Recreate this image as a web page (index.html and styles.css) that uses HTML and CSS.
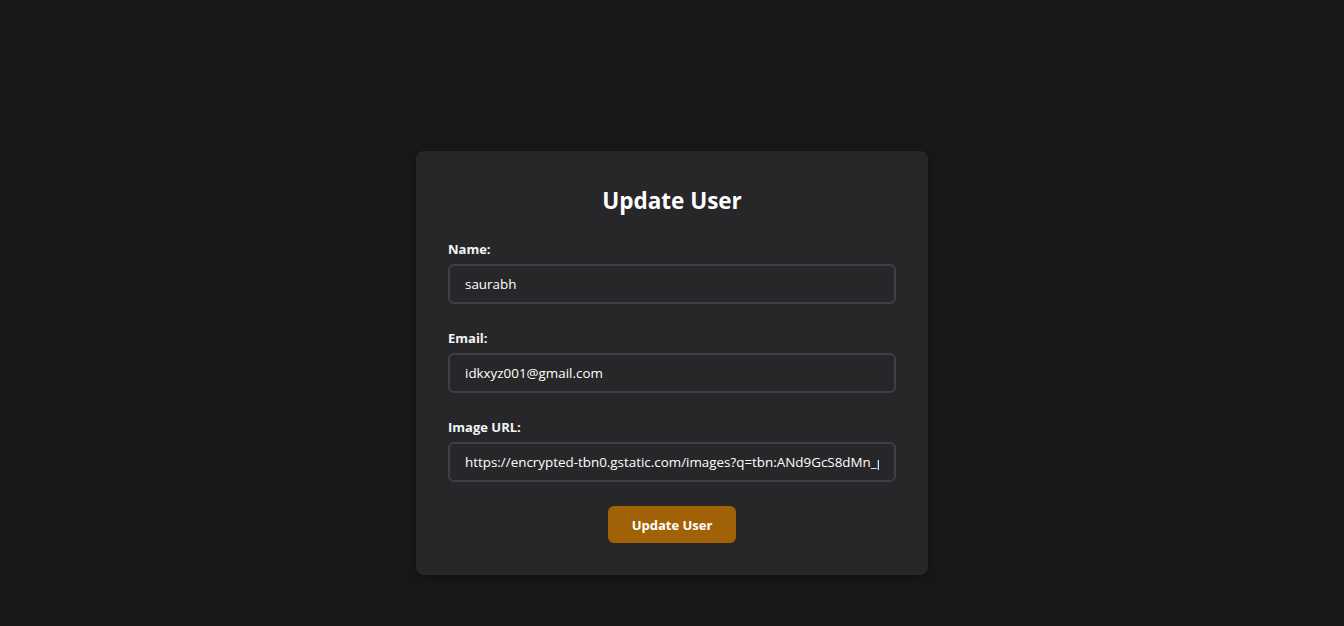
FILE: index.html
```html
<!DOCTYPE html>
<html lang="en">
<head>
<meta charset="utf-8">
<title>Update User</title>
<link rel="stylesheet" href="styles.css">
</head>
<body>
<header class="topbar"></header>
<main class="page">
  <form class="card">
    <h2 class="title">Update User</h2>
    <div class="field">
      <label class="label" for="name">Name:</label>
      <input class="input" id="name" type="text" value="saurabh">
    </div>
    <div class="field">
      <label class="label" for="email">Email:</label>
      <input class="input" id="email" type="email" value="idkxyz001@gmail.com">
    </div>
    <div class="field">
      <label class="label" for="img">Image URL:</label>
      <input class="input" id="img" type="text" value="https://encrypted-tbn0.gstatic.com/images?q=tbn:ANd9GcS8dMn_pL2xq7Jb0TzYwKfR3hVnQeUu4sXoAaDc&amp;s">
    </div>
    <div class="actions">
      <button class="btn" type="button">Update User</button>
    </div>
  </form>
</main>
</body>
</html>
```
FILE: styles.css
```css
* { box-sizing: border-box; }
html, body {
  margin: 0;
  padding: 0;
  background: #18181b;
  color: #ffffff;
  font-family: "Open Sans", "Noto Sans", sans-serif;
}
.topbar { height: 100px; }
.page {
  min-height: 526px;
  display: flex;
  align-items: center;
  justify-content: center;
}
.card {
  width: 512px;
  background: #27272a;
  border-radius: 8px;
  padding: 32px;
  box-shadow: 0 4px 12px rgba(0,0,0,0.25);
}
.title {
  margin: 0 0 20px;
  font-size: 22.5px;
  line-height: 36px;
  font-weight: 700;
  text-align: center;
}
.field {
  display: flex;
  flex-direction: column;
  margin-bottom: 24px;
}
.label {
  font-size: 13px;
  line-height: 21px;
  font-weight: 700;
  color: #f4f4f5;
  margin-bottom: 4px;
}
.input {
  width: 100%;
  height: 40px;
  background: #27272a;
  border: 2px solid #3f3f46;
  border-radius: 6px;
  padding: 0 15px;
  color: #ffffff;
  font-family: inherit;
  font-size: 13.4px;
  outline: none;
}
.actions {
  display: flex;
  justify-content: center;
  margin-top: 1px;
}
.btn {
  height: 37px;
  padding: 0 24px;
  background: #a16207;
  color: #ffffff;
  border: none;
  border-radius: 6px;
  font-family: inherit;
  font-size: 13px;
  font-weight: 700;
  cursor: pointer;
}
```
